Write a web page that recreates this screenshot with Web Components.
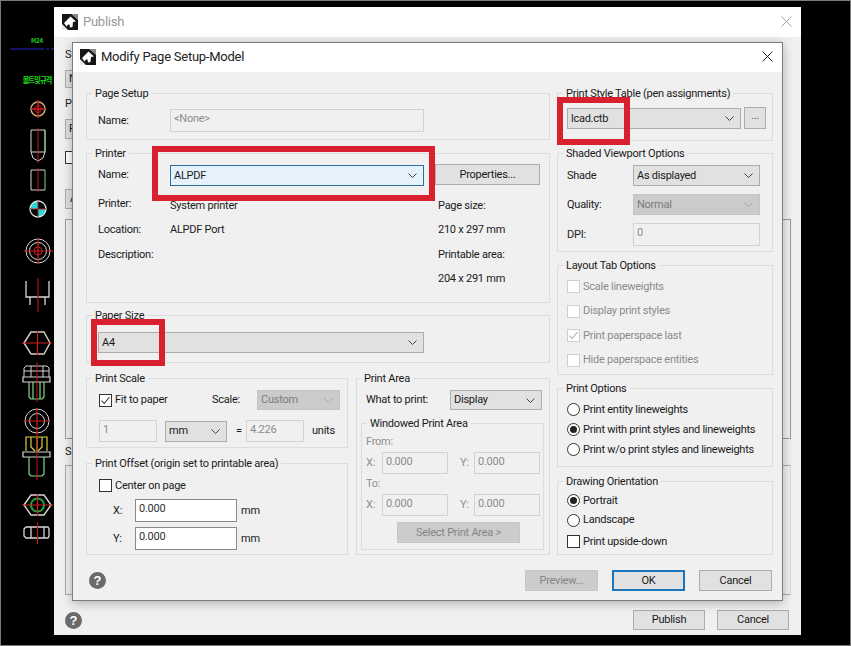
<!DOCTYPE html>
<html>
<head>
<meta charset="utf-8">
<title>Modify Page Setup</title>
<style>
  html, body { margin: 0; padding: 0; background: #000; }
  body { width: 851px; height: 646px; overflow: hidden; position: relative; font: 11px/16px Roboto, "Noto Sans CJK KR", sans-serif; letter-spacing: -.25px; color: #1a1a1a; }
</style>
</head>
<body>
<desk-top></desk-top>

<script>
const CHEVRON = '<svg width="9" height="5" viewBox="0 0 9 5"><path d="M.5 .5 4.500 4.500 8.500 .5" fill="none" stroke="currentColor" stroke-width="1"/></svg>';

const LOGO = `<svg width="16" height="16" viewBox="0 0 16 16">
  <rect width="16" height="16" fill="#161616"/>
  <path d="M0 16V10L6 16z" fill="#e8e8e8"/>
  <path d="M16 0H9L16 6z" fill="#8a8a8a"/>
  <path d="M2 9 8.500 2.500 14 7.500 11 8 10.500 13 8 13.500 7.500 10.500H6L4.500 12.500z" fill="#fff"/>
</svg>`;

const esc = s => (s || '').replace(/&/g, '&amp;').replace(/</g, '&lt;');

function define(name, css, html) {
  class El extends HTMLElement {
    connectedCallback() {
      if (this.shadowRoot) return;
      this.attachShadow({ mode: 'open' });
      const body = typeof html === 'function' ? html(this) : html;
      this.shadowRoot.innerHTML = `<style>${css}</style>${body}`;
    }
  }
  customElements.define(name, El);
}

define('fs-group', `
  :host { display: block; box-sizing: border-box; border: 1px solid #dcdcdc; }
  .legend { display: table; margin: -8px 0 0 var(--lm, 5px); padding: 0 3px; height: 15px; line-height: 15px; background: #f0f0f0; white-space: nowrap; }
  .body { padding: var(--pad, 0); }
`, el => `<div class="legend">${esc(el.getAttribute('legend'))}</div><div class="body"><slot></slot></div>`);

define('fs-combo', `
  :host { display: inline-flex; box-sizing: border-box; height: 21px; align-items: center; justify-content: space-between;
    padding: 0 6px 0 3px; background: #e1e1e1; border: 1px solid #adadad; color: #1a1a1a; white-space: nowrap; }
  :host([state=focus]) { background: #e5f1fb; border-color: #2b6f9e; }
  :host([state=off]) { background: #cbcbcb; border-color: #c4c4c4; color: #7c7c7c; }
  svg { color: #444; flex: none; }
  :host([state=off]) svg { color: #a5a5a5; }
`, el => `<span>${esc(el.getAttribute('value'))}</span>${CHEVRON}`);

define('fs-input', `
  :host { display: inline-flex; box-sizing: border-box; height: 23px; align-items: center; padding: 0 0 3px 3px;
    background: #fff; border: 1px solid #8a8a8a; white-space: nowrap; color: #333; }
  :host([off]) { background: #f0f0f0; border-color: #d2d2d2; color: #8c8c8c; }
`, el => `<span>${esc(el.getAttribute('value'))}</span>`);

define('fs-check', `
  :host { display: inline-flex; align-items: center; height: 13px; gap: 3px; white-space: nowrap; }
  .b { box-sizing: border-box; width: 13px; height: 13px; border: 1px solid #333; background: #fff; flex: none; display: flex; }
  :host([off]) .b { border-color: #cfcfcf; }
  :host([off]) { color: #8b8b8b; }
  svg { display: block; }
  path { fill: none; stroke: #333; stroke-width: 1.1; }
  :host([off]) path { stroke: #aaa; }
`, el => `<span class="b">${el.hasAttribute('checked') ? '<svg width="11" height="11" viewBox="0 0 11 11"><path d="M1.500 5.500 4.200 8.500 9.500 2"/></svg>' : ''}</span><slot></slot>`);

define('fs-radio', `
  :host { display: inline-flex; align-items: center; height: 13px; gap: 3px; white-space: nowrap; }
  .b { box-sizing: border-box; width: 13px; height: 13px; border: 1px solid #333; border-radius: 50%; background: #fff; flex: none; display: flex; align-items: center; justify-content: center; }
  i { width: 7px; height: 7px; border-radius: 50%; background: #222; }
`, el => `<span class="b">${el.hasAttribute('checked') ? '<i></i>' : ''}</span><slot></slot>`);

define('fs-button', `
  :host { display: inline-flex; box-sizing: border-box; height: 21px; align-items: center; justify-content: center;
    background: #e1e1e1; border: 1px solid #adadad; color: #1a1a1a; white-space: nowrap; }
  :host([state=default]) { border: 2px solid #1b75bb; }
  :host([state=off]) { background: #cccccc; border-color: #c6c6c6; color: #858585; }
`, `<slot></slot>`);

define('help-icon', `
  :host { display: inline-flex; box-sizing: border-box; width: 17px; height: 17px; border-radius: 50%; background: #6a6a6a;
    color: #fff; font: bold 13px/17px "Liberation Sans", sans-serif; letter-spacing: 0; align-items: center; justify-content: center; }
`, `?`);

define('red-mark', `
  :host { position: absolute; box-sizing: border-box; border: 6px solid #d9202e; }
`, ``);

define('app-logo', `:host { display: inline-flex; width: 16px; height: 16px; } svg { display: block; }`, LOGO);

define('cad-strip', `
  :host { position: absolute; left: 1px; top: 1px; width: 53px; height: 644px; overflow: hidden; }
  svg { display: block; position: absolute; left: -1px; top: -1px; }
  text { font-family: "Noto Sans CJK KR", sans-serif; letter-spacing: 0; text-anchor: middle; fill: #19d419; }
`, `<svg width="54" height="646" viewBox="0 0 54 646" fill="none" stroke-width="1">
  <text x="37" y="43" font-size="6" font-weight="700">M24</text>
  <path d="M10 49H44M46 49H49M51 49H54" stroke="#2a22c8"/>
  <text x="37.500" y="83" font-size="7.500" font-weight="700" fill="#22e022" textLength="30">볼트 및 규격</text>

  <g stroke="#d6d6d6">
    <circle cx="38" cy="109" r="7" stroke="#c4b278" stroke-width="1.500"/>
    <path d="M31 152V130H45V152L43 158 38 161 33 158 31 152H45" />
    <path d="M45 130V152M45 170V190" stroke="#7fd47f"/>
    <path d="M31 170H45M31 190H45M31 170V190"/>
    <path d="M38 100 38 118M31 109H45" stroke="#d81c1c" stroke-width="1.500"/>
    <circle cx="38" cy="109" r="3.500" stroke="#c41818"/>
    <path d="M38 128V163M38 168V192" stroke="#c41818"/>

    <path d="M38 209V201A8 8 0 0 0 30 209zM38 209V217A8 8 0 0 0 46 209z" fill="#27d8d8" stroke="none"/>
    <circle cx="38" cy="209" r="8" stroke="#e8e8e8" stroke-width="1.300"/>
    <path d="M30 209H46M38 201V217" stroke="#b02020"/>

    <circle cx="38" cy="251" r="12"/><circle cx="38" cy="251" r="8.500"/>
    <circle cx="38" cy="251" r="4" stroke="#d01c1c"/>
    <path d="M24 251H53M38 238V264" stroke="#d01c1c" stroke-width="1.200"/>

    <path d="M26 281V297H49V281M30 297V305M45 297V305" stroke-width="1.300"/>
    <path d="M38 278V312" stroke="#a01818" stroke-width="1.300"/>

    <path d="M24 343 31 332H44L50 343 44 354H31z" stroke="#d8cfc4" stroke-width="1.400"/>
    <path d="M22 343H52M37.500 331V355" stroke="#d01c1c" stroke-width="1.200"/>

    <path d="M24 377V368L26 366H47L49 368V377M24 371H49M31 366V377M43 366V377"/>
    <path d="M23 377H50V382H23z" stroke-width="1.200"/>
    <path d="M29 382V397L31 399H42L44 397V382M33 382V399M40 382V399" stroke="#84d884" stroke-width="1.200"/>
    <path d="M37 362V402" stroke="#c41818"/>

    <circle cx="37" cy="421" r="12"/><circle cx="37" cy="421" r="7.500"/>
    <path d="M24 421H50M37 408V434" stroke="#d01c1c" stroke-width="1.200"/>

    <path d="M26 451V437H47V451M31 437V447L35 451M42 437V447L38 451M37 437V451" stroke="#d8d040" stroke-width="1.200"/>
    <path d="M23 452H50V457H23z" stroke-width="1.200"/>
    <path d="M29 457V474L31 476H42L44 474V457" stroke="#84d884" stroke-width="1.200"/>
    <path d="M37 432V480" stroke="#c41818"/>

    <path d="M24 505 31 495H44L51 505 44 515H31z" stroke-width="1.400"/>
    <circle cx="37.500" cy="505" r="6.500" stroke="#1fa83a" stroke-width="2"/>
    <path d="M22 505H53M37.500 494V516" stroke="#d01c1c" stroke-width="1.200"/>

    <path d="M26 527H48L49 529V536L48 538H26L24 536V529zM31 527V538M44 527V538" stroke-width="1.300"/>
    <path d="M37.500 522V544" stroke="#c41818" stroke-width="1.200"/>
  </g>
</svg>`);

define('publish-window', `
  :host { position: absolute; left: 54px; top: 7px; width: 747px; height: 628px; background: #f0f0f0; box-sizing: border-box; display: flex; flex-direction: column; }
  .title { box-sizing: border-box; height: 30px; flex: none; background: #fff; display: flex; align-items: center; padding: 0 9px 1px 8px; gap: 5px; color: #999; font-size: 13px; }
  .title span { flex: 1; }
  .body { flex: 1; padding: 10px 11px 0; display: flex; flex-direction: column; align-items: flex-start; }
  .lab { height: 16px; }
  fs-combo.a { width: 200px; height: 18px; margin-top: 7px; }
  fs-combo.b { width: 200px; height: 20px; margin-top: 7px; }
  .p { margin-top: 8px; }
  fs-check { margin-top: 12px; }
  fs-button.s { width: 100px; height: 20px; margin-top: 25px; justify-content: flex-start; padding-left: 4px; }
  .box { box-sizing: border-box; width: 726px; border: 1px solid #9b9b9b; background: #f0f0f0; }
  .b1 { height: 220px; margin-top: 10px; }
  .b2 { height: 130px; margin-top: 5px; border-color: #a8a8a8 #dcdcdc #a8a8a8 #a8a8a8; }
  .foot { width: 724px; display: flex; align-items: center; justify-content: flex-end; gap: 12px; margin-top: 15px; }
  .foot help-icon { margin-right: auto; }
  .foot fs-button { width: 72px; height: 20px; }
`, `<div class="title"><app-logo></app-logo><span>Publish</span>
    <svg width="11" height="11" viewBox="0 0 11 11"><path d="M.5 .5 10.500 10.500M10.500 .5 .5 10.500" stroke="#a0a0a0" fill="none"/></svg></div>
  <div class="body">
    <div class="lab">S</div>
    <fs-combo class="a" value="N"></fs-combo>
    <div class="lab p">P</div>
    <fs-combo class="b" value="F"></fs-combo>
    <fs-check></fs-check>
    <fs-button class="s">A</fs-button>
    <div class="box b1"></div>
    <div class="lab" style="margin-top:5px">S</div>
    <div class="box b2"></div>
    <div class="foot"><help-icon></help-icon><fs-button>Publish</fs-button><fs-button>Cancel</fs-button></div>
  </div>`);

define('modify-dialog', `
  :host { position: absolute; left: 72px; top: 42px; width: 711px; height: 559px; box-sizing: border-box; background: #f0f0f0;
    border: 1px solid #7d7d7d; box-shadow: 0 2px 10px rgba(0,0,0,.28); display: flex; flex-direction: column; }
  .title { height: 27px; flex: none; background: #fff; display: flex; align-items: center; padding: 0 9px 2px 7px; gap: 5px; color: #222; font-size: 13px; }
  .title span { flex: 1; }
  .body { padding: 21px 9px 0 13px; flex: 1; }
  .cols { display: grid; grid-template-columns: 464px 216px; column-gap: 7px; }
  .col { display: flex; flex-direction: column; }
  .lower { display: grid; grid-template-columns: 262px 194px; column-gap: 8px; margin-top: 15px; }

  .page { height: 47px; --pad: 8px 0 0 11px; }
  .printer { height: 150px; margin-top: 13px; --pad: 4px 0 0 11px; }
  .paper { height: 48px; margin-top: 12px; --pad: 9px 0 0 11px; }
  .paper fs-combo { width: 326px; }
  .scale { height: 70px; --pad: 4px 0 0 12px; }
  .offset { height: 92px; margin-top: 15px; --pad: 8px 0 0 12px; }
  .offset fs-check { display: flex; }
  .area { height: 177px; --pad: 4px 0 0 9px; --lm: 4px; }

  .g-page { display: grid; grid-template-columns: 72px 254px; align-items: center; }

  .g-printer { display: grid; grid-template-columns: 72px 265px 105px; grid-template-rows: 29px 24px 24px 25px 24px; align-items: center; }
  .g-printer fs-combo { width: 254px; align-self: start; }
  .g-printer fs-button { align-self: start; margin-top: -1px; }
  .g-printer .c1 { grid-column: 1; }
  .g-printer .c2 { grid-column: 2; }
  .g-printer .c3 { grid-column: 3; margin-left: 3px; white-space: nowrap; }
  .r0 { grid-row: 1; } .r1 { grid-row: 2; } .r2 { grid-row: 3; } .r3 { grid-row: 4; } .r4 { grid-row: 5; }
  .name { align-self: start; margin-top: 2px; }
  .up { margin-top: -4px; }

  .line { display: flex; align-items: center; }
  .scale .l1 { height: 20px; }
  .scale .l1 fs-check { width: 113px; }
  .scale .l1 span { width: 45px; }
  .scale .l1 fs-combo { width: 83px; height: 20px; }
  .scale .l2 { margin-top: 10px; }
  .scale .l2 fs-input { width: 58px; height: 22px; }
  .scale .l2 fs-combo { width: 62px; margin-left: 8px; }
  .scale .l2 .eq { width: 10px; margin-left: 9px; }
  .scale .l2 .un { margin-left: 8px; }

  .xy { display: grid; grid-template-columns: 22px 102px auto; row-gap: 5px; align-items: center; margin: 7px 0 0 14px; }
  .xy fs-input { width: 102px; }
  .xy .mm { margin-left: 4px; }

  .area .l1 { height: 20px; }
  .area .l1 span { width: 84px; }
  .area .l1 fs-combo { width: 92px; height: 20px; }
  .win { width: 183px; height: 127px; margin: 13px 0 0 -5px; --pad: 3px 0 0 4px; --lm: 5px; }
  .off { color: #8f8f8f; }
  .win .xl { display: grid; grid-template-columns: 16px 66px 12px 14px 66px; align-items: center; margin-top: 2px; }
  .win .xl .y { grid-column: 4; }
  .win .xl fs-input { height: 22px; }
  .win .to { margin-top: 2px; }
  .win fs-button { width: 123px; margin: 6px 0 0 31px; }

  .style { height: 48px; --pad: 7px 0 0 9px; }
  .style .line { align-items: flex-start; gap: 3px; }
  .style fs-combo { width: 174px; }
  .style fs-button { width: 22px; height: 22px; margin-top: -1px; color: #555; padding-bottom: 4px; }
  .shaded { height: 99px; margin-top: 12px; --pad: 4px 0 0 9px; }
  .g-shade { display: grid; grid-template-columns: 66px 127px; row-gap: 8px; align-items: center; }
  .layout { height: 110px; margin-top: 13px; --pad: 7px 0 0 9px; }
  .stack { display: grid; justify-items: start; }
  .layout .stack { grid-auto-rows: 24.500px; }
  .options { height: 79px; margin-top: 13px; --pad: 7px 0 0 9px; }
  .options .stack { grid-auto-rows: 20px; }
  .orient { height: 74px; margin-top: 14px; --pad: 5px 0 0 9px; }
  .orient .stack { grid-auto-rows: 19.500px; }
  .orient fs-check { margin-top: 2px; }

  .foot { display: flex; align-items: center; gap: 14px; margin: 15px 1px 0 3px; }
  .foot help-icon { margin-right: auto; }
  .foot fs-button { width: 73px; }
`, `<div class="title"><app-logo></app-logo><span>Modify Page Setup-Model</span>
    <svg width="11" height="11" viewBox="0 0 11 11"><path d="M.5 .5 10.500 10.500M10.500 .5 .5 10.500" stroke="#222" fill="none"/></svg></div>
  <div class="body">
    <div class="cols">
      <div class="col">
        <fs-group class="page" legend="Page Setup"><div class="g-page"><span>Name:</span><fs-input off value="&lt;None&gt;"></fs-input></div></fs-group>
        <fs-group class="printer" legend="Printer"><div class="g-printer">
          <span class="c1 r0 name">Name:</span><fs-combo class="c2 r0" state="focus" value="ALPDF"></fs-combo><fs-button class="r0" style="grid-column:3">Properties...</fs-button>
          <span class="c1 r1 up">Printer:</span><span class="c2 r1">System printer</span><span class="c3 r1">Page size:</span>
          <span class="c1 r2">Location:</span><span class="c2 r2">ALPDF Port</span><span class="c3 r2">210 x 297 mm</span>
          <span class="c1 r3">Description:</span><span class="c3 r3">Printable area:</span>
          <span class="c3 r4">204 x 291 mm</span>
        </div></fs-group>
        <fs-group class="paper" legend="Paper Size"><fs-combo value="A4"></fs-combo></fs-group>
        <div class="lower">
          <div>
            <fs-group class="scale" legend="Print Scale">
              <div class="line l1"><fs-check checked>Fit to paper</fs-check><span>Scale:</span><fs-combo state="off" value="Custom"></fs-combo></div>
              <div class="line l2"><fs-input off value="1"></fs-input><fs-combo value="mm"></fs-combo><span class="eq">=</span><fs-input off value="4.226"></fs-input><span class="un">units</span></div>
            </fs-group>
            <fs-group class="offset" legend="Print Offset (origin set to printable area)">
              <fs-check>Center on page</fs-check>
              <div class="xy"><span>X:</span><fs-input value="0.000"></fs-input><span class="mm">mm</span><span>Y:</span><fs-input value="0.000"></fs-input><span class="mm">mm</span></div>
            </fs-group>
          </div>
          <fs-group class="area" legend="Print Area">
            <div class="line l1"><span>What to print:</span><fs-combo value="Display"></fs-combo></div>
            <fs-group class="win" legend="Windowed Print Area">
              <div class="off">From:</div>
              <div class="xl off"><span>X:</span><fs-input off value="0.000"></fs-input><span class="y">Y:</span><fs-input off value="0.000"></fs-input></div>
              <div class="off to">To:</div>
              <div class="xl off"><span>X:</span><fs-input off value="0.000"></fs-input><span class="y">Y:</span><fs-input off value="0.000"></fs-input></div>
              <fs-button state="off">Select Print Area &gt;</fs-button>
            </fs-group>
          </fs-group>
        </div>
      </div>
      <div class="col">
        <fs-group class="style" legend="Print Style Table (pen assignments)"><div class="line"><fs-combo value="lcad.ctb"></fs-combo><fs-button>...</fs-button></div></fs-group>
        <fs-group class="shaded" legend="Shaded Viewport Options"><div class="g-shade">
          <span>Shade</span><fs-combo value="As displayed"></fs-combo>
          <span>Quality:</span><fs-combo state="off" value="Normal"></fs-combo>
          <span>DPI:</span><fs-input off value="0"></fs-input>
        </div></fs-group>
        <fs-group class="layout" legend="Layout Tab Options"><div class="stack">
          <fs-check off>Scale lineweights</fs-check><fs-check off>Display print styles</fs-check><fs-check off checked>Print paperspace last</fs-check><fs-check off>Hide paperspace entities</fs-check>
        </div></fs-group>
        <fs-group class="options" legend="Print Options"><div class="stack">
          <fs-radio>Print entity lineweights</fs-radio><fs-radio checked>Print with print styles and lineweights</fs-radio><fs-radio>Print w/o print styles and lineweights</fs-radio>
        </div></fs-group>
        <fs-group class="orient" legend="Drawing Orientation"><div class="stack">
          <fs-radio checked>Portrait</fs-radio><fs-radio>Landscape</fs-radio><fs-check>Print upside-down</fs-check>
        </div></fs-group>
      </div>
    </div>
    <div class="foot"><help-icon></help-icon><fs-button state="off">Preview...</fs-button><fs-button state="default">OK</fs-button><fs-button>Cancel</fs-button></div>
  </div>`);

define('desk-top', `
  :host { position: absolute; left: 0; top: 0; width: 851px; height: 646px; box-sizing: border-box; background: #000; box-shadow: inset 0 0 0 1px #7a7a7a; display: block; }
  .a { left: 152px; top: 146px; width: 283px; height: 55px; }
  .b { left: 91px; top: 319px; width: 74px; height: 47px; }
  .c { left: 557px; top: 97px; width: 73px; height: 48px; }
`, `<cad-strip></cad-strip><publish-window></publish-window><modify-dialog></modify-dialog>
  <red-mark class="a"></red-mark><red-mark class="b"></red-mark><red-mark class="c"></red-mark>`);
</script>
</body>
</html>
